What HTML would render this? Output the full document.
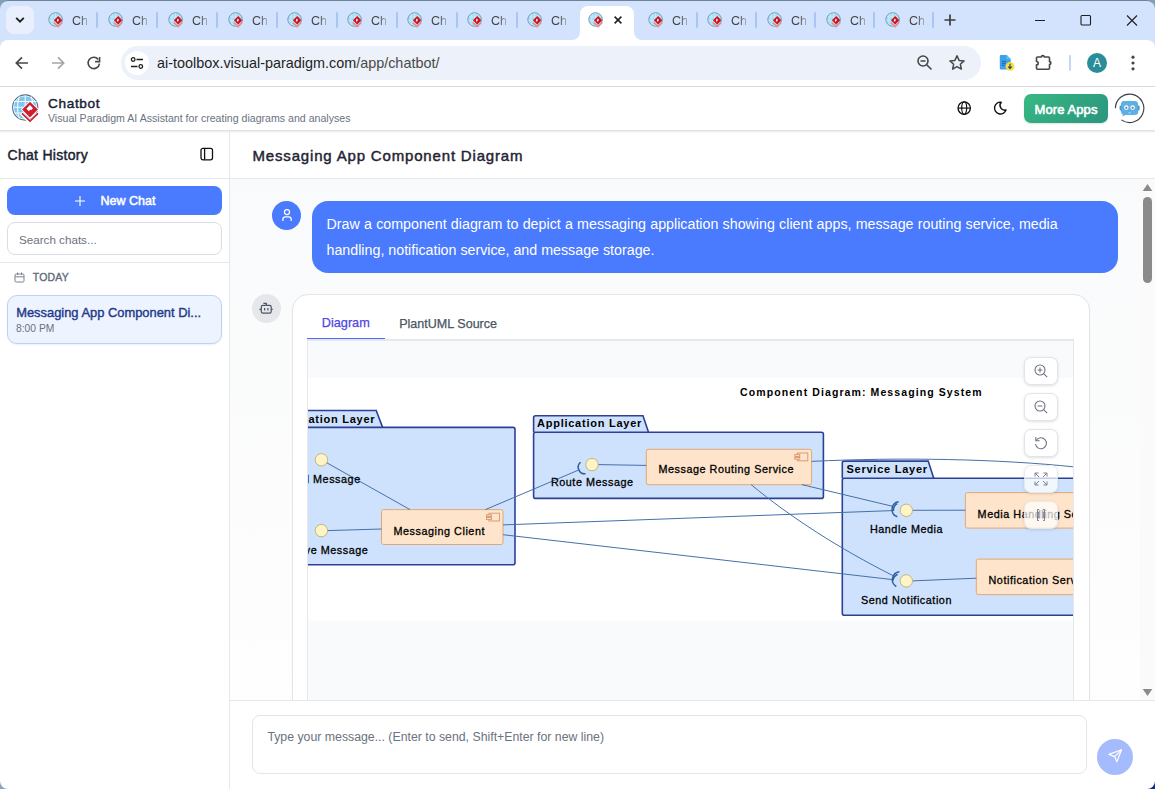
<!DOCTYPE html>
<html><head><meta charset="utf-8">
<style>
*{box-sizing:border-box;margin:0;padding:0}
html,body{width:1155px;height:789px;overflow:hidden;background:#fff;font-family:"Liberation Sans",sans-serif}
.a{position:absolute}
svg{display:block}
#desk{position:absolute;left:0;top:0;width:1155px;height:789px;background:#7f9fb8}
#frame{position:absolute;left:0;top:0;width:1155px;height:789px;background:#6f8493;border-radius:9px 9px 0 0}
#tabstrip{position:absolute;left:0;top:1px;width:1155px;height:50px;background:#d3e3fd;border-radius:8px 8px 0 0}
#ddbtn{position:absolute;left:6px;top:6px;width:28px;height:28px;background:#e9effc;border-radius:8px}
.fav{position:absolute;top:12px;width:16px;height:16px}
.tabtxt{position:absolute;top:12.2px;font-size:12.5px;color:#444;line-height:18px;width:15px;overflow:hidden;white-space:nowrap;-webkit-mask-image:linear-gradient(90deg,#000 50%,rgba(0,0,0,.35) 100%)}
.sep{position:absolute;top:12px;width:2px;height:16px;background:#a8c5f5;border-radius:1px}
#acttab{position:absolute;left:572px;top:6px;width:70px;height:34px}
#toolbar{position:absolute;left:0;top:40px;width:1155px;height:46px;background:#fff;border-radius:8px 8px 0 0}
#tbline{position:absolute;left:0;top:86px;width:1155px;height:1px;background:#d9dadd}
#omni{position:absolute;left:121px;top:46px;width:860px;height:34px;background:#edf1f9;border-radius:17px}
#tune{position:absolute;left:125px;top:51px;width:24px;height:24px;background:#fff;border-radius:12px}
#url{position:absolute;left:157px;top:54px;font-size:14.4px;line-height:18px;color:#1f1f1f;white-space:nowrap}
#url span{color:#4a4a4a}
#avatar{position:absolute;left:1087px;top:53px;width:20px;height:20px;border-radius:10px;background:#2a8d9a;color:#fff;font-size:12px;line-height:20px;text-align:center}
</style></head>
<body>
<svg width="0" height="0" style="position:absolute">
<defs>
<symbol id="vpfav" viewBox="0 0 16 16">
<circle cx="7.6" cy="7.5" r="6.8" fill="#a9def7" stroke="#7a9db0" stroke-width="1"/>
<path d="M2.5 5h10M1.5 8.5h12M7.6 1v13M4.8 1.8c-1.6 3.2-1.6 8.2 0 11.4" stroke="#cdeefc" stroke-width=".7" fill="none"/>
<path d="M5.9 10.6l4.3 4.2 4.1-4.2" stroke="#ec8a90" stroke-width="1.5" fill="none"/>
<path d="M10.2 4.1l4.1 4.2-4.1 4.2-4.3-4.2z" fill="#d0111f"/>
<path d="M9.7 6.6l1.4 1.3-.9.9-.1 1.2-1.3-1.3z" fill="#fff"/>
</symbol>
</defs>
</svg>
<div id="desk"></div>
<div id="frame"></div>
<div id="tabstrip"></div>
<div id="ddbtn"></div>
<svg class="a" style="left:15px;top:16px" width="10" height="8" viewBox="0 0 10 8"><path d="M1.2 1.8L5 5.6 8.8 1.8" stroke="#1f1f1f" stroke-width="1.9" fill="none"/></svg>
<svg id="acttab" viewBox="0 0 70 34"><path d="M0 34 A8 8 0 0 0 8 26 V8 A8 8 0 0 1 16 0 H54 A8 8 0 0 1 62 8 V26 A8 8 0 0 0 70 34 Z" fill="#fff"/></svg>
<svg class="fav" style="left:48px" viewBox="0 0 16 16"><use href="#vpfav"/></svg>
<div class="tabtxt" style="left:72px">Ch</div>
<svg class="fav" style="left:108px" viewBox="0 0 16 16"><use href="#vpfav"/></svg>
<div class="tabtxt" style="left:132px">Ch</div>
<svg class="fav" style="left:168px" viewBox="0 0 16 16"><use href="#vpfav"/></svg>
<div class="tabtxt" style="left:192px">Ch</div>
<svg class="fav" style="left:228px" viewBox="0 0 16 16"><use href="#vpfav"/></svg>
<div class="tabtxt" style="left:252px">Ch</div>
<svg class="fav" style="left:287px" viewBox="0 0 16 16"><use href="#vpfav"/></svg>
<div class="tabtxt" style="left:311px">Ch</div>
<svg class="fav" style="left:347px" viewBox="0 0 16 16"><use href="#vpfav"/></svg>
<div class="tabtxt" style="left:371px">Ch</div>
<svg class="fav" style="left:407px" viewBox="0 0 16 16"><use href="#vpfav"/></svg>
<div class="tabtxt" style="left:431px">Ch</div>
<svg class="fav" style="left:467px" viewBox="0 0 16 16"><use href="#vpfav"/></svg>
<div class="tabtxt" style="left:491px">Ch</div>
<svg class="fav" style="left:527px" viewBox="0 0 16 16"><use href="#vpfav"/></svg>
<div class="tabtxt" style="left:551px">Ch</div>
<svg class="fav" style="left:588px" viewBox="0 0 16 16"><use href="#vpfav"/></svg>
<svg class="fav" style="left:648px" viewBox="0 0 16 16"><use href="#vpfav"/></svg>
<div class="tabtxt" style="left:672px">Ch</div>
<svg class="fav" style="left:707px" viewBox="0 0 16 16"><use href="#vpfav"/></svg>
<div class="tabtxt" style="left:731px">Ch</div>
<svg class="fav" style="left:767px" viewBox="0 0 16 16"><use href="#vpfav"/></svg>
<div class="tabtxt" style="left:791px">Ch</div>
<svg class="fav" style="left:826px" viewBox="0 0 16 16"><use href="#vpfav"/></svg>
<div class="tabtxt" style="left:850px">Ch</div>
<svg class="fav" style="left:885px" viewBox="0 0 16 16"><use href="#vpfav"/></svg>
<div class="tabtxt" style="left:909px">Ch</div>
<div class="sep" style="left:96px"></div>
<div class="sep" style="left:156px"></div>
<div class="sep" style="left:216px"></div>
<div class="sep" style="left:276px"></div>
<div class="sep" style="left:335.5px"></div>
<div class="sep" style="left:395.8px"></div>
<div class="sep" style="left:455.8px"></div>
<div class="sep" style="left:516px"></div>
<div class="sep" style="left:695.8px"></div>
<div class="sep" style="left:754.8px"></div>
<div class="sep" style="left:814px"></div>
<div class="sep" style="left:873px"></div>
<div class="sep" style="left:932px"></div>
<svg class="a" style="left:614px;top:16px" width="8" height="8" viewBox="0 0 8 8"><path d="M.6 .6L7.4 7.4M7.4 .6L.6 7.4" stroke="#1f1f1f" stroke-width="1.5"/></svg>
<svg class="a" style="left:944px;top:14px" width="12" height="12" viewBox="0 0 12 12"><path d="M6 .5v11M.5 6h11" stroke="#3c3c3c" stroke-width="1.7"/></svg>
<div class="a" style="left:1035px;top:20px;width:10px;height:1px;background:#1f1f1f"></div>
<svg class="a" style="left:1080px;top:14px" width="12" height="12" viewBox="0 0 12 12"><rect x="1" y="1.5" width="9.5" height="9.5" rx="1" stroke="#1f1f1f" stroke-width="1.1" fill="none"/></svg>
<svg class="a" style="left:1126px;top:14px" width="12" height="12" viewBox="0 0 12 12"><path d="M1 1.5l10 10M11 1.5l-10 10" stroke="#1f1f1f" stroke-width="1.1"/></svg>

<div id="toolbar"></div>
<div id="tbline"></div>
<svg class="a" style="left:14px;top:55px" width="16" height="16" viewBox="0 0 16 16"><path d="M14 8H2.5M8 2.3L2.3 8 8 13.7" stroke="#474747" stroke-width="1.7" fill="none"/></svg>
<svg class="a" style="left:50px;top:55px" width="16" height="16" viewBox="0 0 16 16"><path d="M2 8h11.5M8 2.3L13.7 8 8 13.7" stroke="#a5a5a5" stroke-width="1.7" fill="none"/></svg>
<svg class="a" style="left:80px;top:50px" width="30" height="26" viewBox="80 50 30 26"><path d="M99.4 63.6A5.65 5.65 0 1 1 98.2 59.4" stroke="#474747" stroke-width="1.6" fill="none"/><path d="M99.6 57v4.6H95.1" stroke="#474747" stroke-width="1.6" fill="none"/></svg>
<div id="omni"></div>
<div id="tune"></div>
<svg class="a" style="left:129px;top:55px" width="16" height="16" viewBox="0 0 16 16"><circle cx="4.2" cy="4.5" r="1.8" stroke="#1f1f1f" stroke-width="1.3" fill="none"/><path d="M7.5 4.5h6.5M2 11.5h6.5" stroke="#1f1f1f" stroke-width="1.5"/><circle cx="11.8" cy="11.5" r="1.8" stroke="#1f1f1f" stroke-width="1.3" fill="none"/></svg>
<div id="url">ai-toolbox.visual-paradigm.com<span>/app/chatbot/</span></div>
<svg class="a" style="left:916px;top:54px" width="18" height="18" viewBox="0 0 18 18"><circle cx="7" cy="7" r="5" stroke="#474747" stroke-width="1.6" fill="none"/><path d="M4.5 7h5M10.7 10.7l4.8 4.8" stroke="#474747" stroke-width="1.6"/></svg>
<svg class="a" style="left:948px;top:54px" width="18" height="18" viewBox="0 0 18 18"><path d="M9 1.8l2.1 4.6 5 .5-3.8 3.3 1.1 4.9L9 12.6l-4.4 2.5 1.1-4.9L1.9 6.9l5-.5z" stroke="#474747" stroke-width="1.5" fill="none" stroke-linejoin="round"/></svg>
<svg class="a" style="left:996px;top:52px" width="20" height="20" viewBox="996 52 20 20"><path d="M1000.7 55h6l4 4v9.6a.9.9 0 0 1-.9.9h-9.1a.9.9 0 0 1-.9-.9v-12.7a.9.9 0 0 1 .9-.9z" fill="#3e9ff0"/><path d="M1006.5 55l4.2 4.2h-4.2z" fill="#3fd9c4"/><path d="M1001.8 61.4h4.2M1001.8 63.3h4.2M1001.8 65.2h3" stroke="#1d5fa8" stroke-width=".9"/><circle cx="1010" cy="66.4" r="4.4" fill="#f6dc3c"/><path d="M1010 63.8v4.6M1008.2 66.7l1.8 1.8 1.8-1.8" stroke="#233a6b" stroke-width="1.1" fill="none"/></svg>
<svg class="a" style="left:1032px;top:52px" width="22" height="22" viewBox="1032 52 22 22"><path d="M1037.5 57h3.9a1.4 1.4 0 0 1 2.8 0h4.3a1 1 0 0 1 1 1v3.6a1.4 1.4 0 0 1 0 2.8v3.9a1 1 0 0 1-1 1h-11a1 1 0 0 1-1-1v-3.4a1.7 1.7 0 0 0 0-3.4v-3.5a1 1 0 0 1 1-1z" stroke="#474747" stroke-width="1.6" fill="none" stroke-linejoin="round"/></svg>
<div class="a" style="left:1069px;top:55px;width:2px;height:16px;background:#c8d6f0;border-radius:1px"></div>
<div id="avatar">A</div>
<svg class="a" style="left:1130px;top:55px" width="6" height="16" viewBox="0 0 6 16"><circle cx="3" cy="2.2" r="1.6" fill="#474747"/><circle cx="3" cy="8" r="1.6" fill="#474747"/><circle cx="3" cy="13.8" r="1.6" fill="#474747"/></svg>

<!-- APP -->
<div class="a" style="left:0;top:87px;width:1155px;height:702px;background:#fff"></div>
<div class="a" style="left:0;top:130px;width:1155px;height:1px;background:#e1e3e7"></div>
<div class="a" style="left:0;top:131px;width:1155px;height:1px;background:#eceef1"></div>
<div class="a" style="left:0;top:132px;width:1155px;height:1px;background:#f7f8f9"></div>
<svg class="a" style="left:8px;top:90px" width="34" height="35" viewBox="8 90 34 35">
<circle cx="25.2" cy="107.5" r="12.6" fill="#fff" stroke="#4f7386" stroke-width="1.1"/>
<circle cx="25.2" cy="107.5" r="11.2" fill="#7fc6f0"/>
<path d="M14 101.5h22.4M13.8 107.3h22.8M14.5 113h21.4M25.2 95.5v24M19.5 96.5c-2.5 5-2.5 17 0 22M31 96.5c2.5 5 2.5 17 0 22" stroke="#f4fbff" stroke-width="1.1" fill="none"/>
<path d="M21.2 113.2L30 122l8.8-8.8" stroke="#fff" stroke-width="3.6" fill="none"/>
<path d="M22 113.3l8 7.8 8-7.8" stroke="#cc1f2d" stroke-width="1.7" fill="none"/>
<path d="M30 100.4l9.2 9.2-9.2 9.2-9.2-9.2z" fill="#fff"/>
<path d="M30 101.7l7.9 7.9-7.9 7.9-7.9-7.9z" fill="#cc1f2d"/>
<path d="M29.9 105.1l3.1 3.1-2 2-0.6-.6-1.6 1.6-2.4-2.4z" fill="#fff"/>
</svg>
<div class="a" style="left:48px;top:96.5px;font-size:13.6px;line-height:14px;letter-spacing:.65px;-webkit-text-stroke:.45px #1b2233;color:#1b2233;white-space:nowrap">Chatbot</div>
<div class="a" style="left:48px;top:112.5px;font-size:10.6px;line-height:11px;color:#6b7280;white-space:nowrap">Visual Paradigm AI Assistant for creating diagrams and analyses</div>
<svg class="a" style="left:956px;top:100px" width="16" height="16" viewBox="0 0 16 16"><circle cx="8.2" cy="8.1" r="6.2" stroke="#111" stroke-width="1.3" fill="none"/><path d="M2 8.1h12.4" stroke="#111" stroke-width="1.2"/><ellipse cx="8.2" cy="8.1" rx="2.5" ry="6.2" stroke="#111" stroke-width="1.2" fill="none"/></svg>
<svg class="a" style="left:992px;top:100px" width="16" height="16" viewBox="0 0 16 16"><path d="M9.2 2.2A5.9 5.9 0 1 0 14 10 4.8 4.8 0 0 1 9.2 2.2z" stroke="#111" stroke-width="1.4" fill="none" stroke-linejoin="round"/></svg>
<div class="a" style="left:1024px;top:94px;width:84px;height:29px;border-radius:7px;background:linear-gradient(135deg,#38b882,#2a9580);box-shadow:0 1px 2px rgba(0,0,0,.12)"></div>
<div class="a" style="left:1024px;top:103px;width:84px;text-align:center;font-size:13px;line-height:14px;letter-spacing:.1px;-webkit-text-stroke:.6px #fff;color:#fff;white-space:nowrap">More Apps</div>
<svg class="a" style="left:1110px;top:90px" width="40" height="36" viewBox="1110 90 40 36">
<path d="M1115.4 108.3A14.2 14.2 0 1 1 1121.4 119.9" stroke="#3a4150" stroke-width="1.15" fill="none"/>
<path d="M1121 103.3a3 3 0 0 1 2.8-2.2h11.4a3 3 0 0 1 2.8 2.2l.2 8.2a3.5 3.5 0 0 1-3.5 3.6h-9.6l-2.6 1.6.3-2.2a3.5 3.5 0 0 1-1.9-3z" fill="#5db0e6"/>
<rect x="1119.6" y="105.5" width="2" height="5" rx="1" fill="#4a9ad4"/><rect x="1137.6" y="105.5" width="2" height="5" rx="1" fill="#4a9ad4"/>
<circle cx="1126.3" cy="107.6" r="2.3" fill="#f4fbff"/><circle cx="1132.6" cy="107.6" r="2.3" fill="#f4fbff"/>
<circle cx="1126.3" cy="107.8" r="1.1" fill="#6f7f8c"/><circle cx="1132.6" cy="107.8" r="1.1" fill="#6f7f8c"/>
<path d="M1128.3 112.4h2.6a1.3 1 0 0 1-2.6 0z" fill="#bfe3f8"/>
</svg>

<!-- SIDEBAR -->
<div class="a" style="left:229px;top:131px;width:1px;height:658px;background:#e5e7eb"></div>
<div class="a" style="left:7.5px;top:147.6px;font-size:14px;line-height:14px;letter-spacing:.3px;-webkit-text-stroke:.45px #1b2233;color:#1b2233;white-space:nowrap">Chat History</div>
<svg class="a" style="left:199px;top:146px" width="16" height="16" viewBox="0 0 16 16"><rect x="2" y="2.3" width="11.5" height="11.5" rx="2" stroke="#111" stroke-width="1.3" fill="none"/><path d="M5.6 2.3v11.5" stroke="#111" stroke-width="1.3"/></svg>
<div class="a" style="left:0;top:178px;width:229px;height:1px;background:#e5e7eb"></div>
<div class="a" style="left:7px;top:186px;width:215px;height:29px;border-radius:8px;background:#4a7afd"></div>
<svg class="a" style="left:74px;top:195px" width="12" height="12" viewBox="0 0 12 12"><path d="M6 1v10M1 6h10" stroke="#fff" stroke-width="1.1"/></svg>
<div class="a" style="left:100.5px;top:195.2px;font-size:12.5px;line-height:13px;-webkit-text-stroke:.5px #fff;color:#fff;white-space:nowrap">New Chat</div>
<div class="a" style="left:7px;top:222px;width:215px;height:33px;border-radius:8px;border:1px solid #dadde2;background:#fff"></div>
<div class="a" style="left:19px;top:234px;font-size:11.65px;line-height:12px;color:#6b7280;white-space:nowrap">Search chats...</div>
<div class="a" style="left:0;top:262px;width:229px;height:1px;background:#e5e7eb"></div>
<svg class="a" style="left:14px;top:272px" width="11" height="11" viewBox="0 0 11 11"><rect x="1" y="2" width="9" height="8" rx="1.2" stroke="#7b8190" stroke-width="1" fill="none"/><path d="M1 4.8h9M3.5 .5v2.5M7.5 .5v2.5" stroke="#7b8190" stroke-width="1"/></svg>
<div class="a" style="left:32.8px;top:272px;font-size:10.5px;line-height:11px;letter-spacing:.2px;-webkit-text-stroke:.35px #636a78;color:#636a78;white-space:nowrap">TODAY</div>
<div class="a" style="left:7px;top:295px;width:215px;height:49px;border-radius:10px;border:1px solid #bcd2fb;background:#eef4ff;box-shadow:0 1px 2px rgba(0,0,0,.07)"></div>
<div class="a" style="left:16.2px;top:305.5px;font-size:12.9px;line-height:13px;-webkit-text-stroke:.4px #1e3a8a;color:#1e3a8a;white-space:nowrap">Messaging App Component Di...</div>
<div class="a" style="left:16px;top:323px;font-size:10.3px;line-height:11px;color:#6b7280;white-space:nowrap">8:00 PM</div>

<!-- MAIN -->
<div class="a" style="left:230px;top:179px;width:925px;height:521px;background:linear-gradient(#f9fafb,#fefefe)"></div>
<div class="a" style="left:1140px;top:179px;width:15px;height:521px;background:#fafafa"></div>
<div class="a" style="left:230px;top:178px;width:925px;height:1px;background:#e5e7eb"></div>
<div class="a" style="left:252.5px;top:148.2px;font-size:15px;line-height:16px;font-weight:400;letter-spacing:.83px;-webkit-text-stroke:.45px #1f2433;color:#1f2433;white-space:nowrap">Messaging App Component Diagram</div>

<div class="a" style="left:272px;top:201px;width:29px;height:29px;border-radius:50%;background:#4a7afd"></div>
<svg class="a" style="left:276px;top:205px" width="20" height="20" viewBox="276 205 20 20"><circle cx="287" cy="212.1" r="2.55" stroke="#fff" stroke-width="1.2" fill="none"/><path d="M282.9 221v-1.6a2.5 2.5 0 0 1 2.5-2.5h3.3a2.5 2.5 0 0 1 2.5 2.5V221" stroke="#fff" stroke-width="1.2" fill="none"/></svg>
<div class="a" style="left:312px;top:201px;width:806px;height:72px;border-radius:16px;background:#4a7afd"></div>
<div class="a" style="left:326.5px;top:212.3px;font-size:14.25px;line-height:25.7px;color:#fff;white-space:nowrap;word-spacing:.27px">Draw a component diagram to depict a messaging application showing client apps, message routing service, media</div>
<div class="a" style="left:326.5px;top:238px;font-size:14.25px;line-height:25.7px;color:#fff;white-space:nowrap">handling, notification service, and message storage.</div>

<div class="a" style="left:252px;top:294px;width:29px;height:29px;border-radius:50%;background:#e5e7eb"></div>
<svg class="a" style="left:256px;top:298px" width="20" height="20" viewBox="256 298 20 20"><rect x="261.3" y="305.4" width="9.9" height="7.8" rx="1.6" stroke="#4b5563" stroke-width="1.2" fill="none"/><path d="M266.3 305.4v-2h-2.9M259.4 309.4h1.9M271.2 309.4h1.5M264.6 308v2.4M267.9 308v2.4" stroke="#4b5563" stroke-width="1.2" fill="none"/></svg>

<div class="a" style="left:292px;top:294px;width:798px;height:520px;border-radius:16px;border:1px solid #e3e5e9;background:#fff;box-shadow:0 1px 2px rgba(0,0,0,.04)"></div>
<div class="a" style="left:321.8px;top:317px;font-size:12.7px;line-height:13px;color:#4f46e5;white-space:nowrap;-webkit-text-stroke:.25px #4f46e5">Diagram</div>
<div class="a" style="left:399.2px;top:317.5px;font-size:12.55px;line-height:13px;color:#4b5563;white-space:nowrap;-webkit-text-stroke:.25px #4b5563">PlantUML Source</div>
<div class="a" style="left:307px;top:339px;width:767px;height:400px;border:1px solid #e5e7eb;background:#f9fafb"></div>
<div class="a" style="left:307px;top:339px;width:767px;height:2px;background:#e5e7eb"></div>
<div class="a" style="left:307px;top:337.7px;width:78px;height:1.5px;background:#4f6ef7"></div>

<div class="a" style="left:308px;top:340px;width:765px;height:360px;overflow:hidden">
<svg class="a" style="left:0;top:0" width="765" height="360" viewBox="308 340 765 360">
<rect x="308" y="378" width="765" height="242.5" fill="#fff"/>
<g stroke="#2c4196" stroke-width="1.6" fill="#cee2fd">
<path d="M255 427.4V412.5a2 2 0 0 1 2-2H376.2L382.6 427.4"/>
<rect x="255" y="427.4" width="260" height="137.4" rx="2"/>
<path d="M533.6 432.3V417.7a2 2 0 0 1 2-2H643L648.5 432.3"/>
<rect x="533.6" y="432.3" width="289.8" height="66.1" rx="2"/>
<path d="M842.3 478.2V463.1a2 2 0 0 1 2-2H928.2L933.7 478.2"/>
<rect x="842.3" y="478.2" width="300" height="137.1" rx="2"/>
</g>
<g stroke="#e0a878" stroke-width="1" fill="#fde4cb">
<rect x="381.5" y="509.6" width="121.5" height="34.9" rx="2"/>
<rect x="646.3" y="449.3" width="165.3" height="35.4" rx="2"/>
<rect x="965.4" y="492.6" width="200" height="35.5" rx="2"/>
<rect x="976.3" y="559.1" width="200" height="35.5" rx="2"/>
</g>
<g stroke="#d8966a" stroke-width=".9" fill="#fde4cb">
<rect x="489" y="513.2" width="10.5" height="7.8"/>
<rect x="486.5" y="514.8" width="5" height="1.8"/>
<rect x="486.5" y="517.6" width="5" height="1.8"/>
<rect x="797.3" y="453" width="10.5" height="7.8"/>
<rect x="794.8" y="454.6" width="5" height="1.8"/>
<rect x="794.8" y="457.4" width="5" height="1.8"/>
</g>
<g stroke="#4670a8" stroke-width="1" fill="none">
<path d="M326.8 462.8L410 509.6"/>
<path d="M327.4 530.6L381.5 529"/>
<path d="M485.4 509.6L578 470.3"/>
<path d="M598 464.6L646.3 465.4"/>
<path d="M503 524.9L892.3 510.6"/>
<path d="M503 534.7L892.5 579.6"/>
<path d="M811.6 461.4C900 457 1000 459 1075 467"/>
<path d="M751.1 484.6C790 517 840 549 892.8 575.5"/>
<path d="M801.8 484.6L892.6 506.3"/>
<path d="M912.6 510.3L965.4 510.2"/>
<path d="M912.6 580.9L976.3 578.2"/>
</g>
<g stroke="#2f5f9e" stroke-width="1.5" fill="none">
<path d="M580.6 462.2A6.6 6.6 0 0 0 585.6 473.8"/>
<path d="M898.6 501.8A7.7 7.7 0 0 0 897.3 516.7"/>
<path d="M897.2 503.6A7.7 7.7 0 0 0 893.5 511"/>
<path d="M899.4 571.7A8 8 0 0 0 896.3 586.5"/>
<path d="M897.6 574.2A8 8 0 0 0 893 580.5"/>
</g>
<g stroke="#c4ad6c" stroke-width=".9" fill="#fef5c6">
<circle cx="321.4" cy="459.8" r="6.2"/>
<circle cx="321.4" cy="530.6" r="6.2"/>
<circle cx="592" cy="464.6" r="6.2"/>
<circle cx="906.3" cy="510.3" r="6.2"/>
<circle cx="906.3" cy="580.9" r="6.2"/>
</g>
<g font-family="Liberation Sans" fill="#000">
<text x="740" y="395.6" font-size="10.5" font-weight="700" letter-spacing="1.1">Component Diagram: Messaging System</text>
<text x="375.4" y="423.3" font-size="11" font-weight="700" text-anchor="end" letter-spacing=".75">Presentation Layer</text>
<text x="537" y="426.9" font-size="11" font-weight="700" letter-spacing=".75">Application Layer</text>
<text x="846.5" y="473" font-size="11" font-weight="700" letter-spacing=".75">Service Layer</text>
<g font-size="10.8" stroke="#000" stroke-width=".3" letter-spacing=".55">
<text x="321.4" y="483.3" text-anchor="middle">Send Message</text>
<text x="321.4" y="554" text-anchor="middle">Receive Message</text>
<text x="393.4" y="535.2">Messaging Client</text>
<text x="592.3" y="486.3" text-anchor="middle">Route Message</text>
<text x="658.4" y="473.4">Message Routing Service</text>
<text x="906.5" y="532.7" text-anchor="middle">Handle Media</text>
<text x="906.5" y="603.7" text-anchor="middle">Send Notification</text>
<text x="977.6" y="517.7">Media Handling Service</text>
<text x="988.5" y="583.8">Notification Service</text>
</g>
</g>
</svg>
</div>

<!-- zoom buttons -->
<div class="a" style="left:1024px;top:356.5px;width:34px;height:28px;border-radius:7px;background:rgba(255,255,255,1);box-shadow:0 1px 3px rgba(0,0,0,.13);border:1px solid rgba(225,228,233,1)"></div>
<svg class="a" style="left:1033px;top:362.5px" width="16" height="16" viewBox="0 0 16 16"><circle cx="7" cy="7" r="5" stroke="#6b7280" stroke-width="1.05" fill="none"/><path d="M4.6 7h4.8M7 4.6v4.8M10.6 10.6l3.6 3.6" stroke="#6b7280" stroke-width="1.05"/></svg>
<div class="a" style="left:1024px;top:392.5px;width:34px;height:28px;border-radius:7px;background:rgba(255,255,255,1);box-shadow:0 1px 3px rgba(0,0,0,.13);border:1px solid rgba(225,228,233,1)"></div>
<svg class="a" style="left:1033px;top:398.5px" width="16" height="16" viewBox="0 0 16 16"><circle cx="7" cy="7" r="5" stroke="#6b7280" stroke-width="1.05" fill="none"/><path d="M4.6 7h4.8M10.6 10.6l3.6 3.6" stroke="#6b7280" stroke-width="1.05"/></svg>
<div class="a" style="left:1024px;top:428.7px;width:34px;height:28px;border-radius:7px;background:rgba(255,255,255,1);box-shadow:0 1px 3px rgba(0,0,0,.13);border:1px solid rgba(225,228,233,1)"></div>
<svg class="a" style="left:1033px;top:434.7px" width="16" height="16" viewBox="0 0 16 16"><path d="M3.2 5.5A5.5 5.5 0 1 1 2.5 9" stroke="#6b7280" stroke-width="1.05" fill="none"/><path d="M2.8 2v3.8h3.8" stroke="#6b7280" stroke-width="1.05" fill="none"/></svg>
<div class="a" style="left:1024px;top:464.7px;width:34px;height:28px;border-radius:7px;background:rgba(255,255,255,0.72);box-shadow:0 1px 3px rgba(0,0,0,.13);border:1px solid rgba(225,228,233,0.72)"></div>
<svg class="a" style="left:1033px;top:470.7px" width="16" height="16" viewBox="0 0 16 16"><path d="M2 2l4 4M2 2v3.5M2 2h3.5M14 2l-4 4M14 2v3.5M14 2h-3.5M2 14l4-4M2 14v-3.5M2 14h3.5M14 14l-4-4M14 14v-3.5M14 14h-3.5" stroke="#7b818c" stroke-width="1" fill="none"/></svg>
<div class="a" style="left:1024px;top:501px;width:34px;height:28px;border-radius:7px;background:rgba(255,255,255,0.72);box-shadow:0 1px 3px rgba(0,0,0,.13);border:1px solid rgba(225,228,233,0.72)"></div>
<svg class="a" style="left:1033px;top:507px" width="16" height="16" viewBox="0 0 16 16"><path d="M6 2.5H4.5v11H6M10 2.5h1.5v11H10M6.5 5h-.8v6h.8M9.5 5h.8v6h-.8" stroke="#7b818c" stroke-width="1" fill="none"/></svg>


<!-- scrollbar -->
<svg class="a" style="left:1142px;top:183px" width="11" height="9" viewBox="0 0 11 9"><path d="M5.5 1L10.3 8H.7z" fill="#8a8a8a"/></svg>
<div class="a" style="left:1143px;top:197px;width:9px;height:86px;border-radius:4.5px;background:#8a8a8a"></div>
<svg class="a" style="left:1142px;top:688px" width="11" height="9" viewBox="0 0 11 9"><path d="M5.5 8L10.3 1H.7z" fill="#8a8a8a"/></svg>

<!-- INPUT -->
<div class="a" style="left:230px;top:700px;width:925px;height:89px;background:#fff;border-top:1px solid #e5e7eb"></div>
<div class="a" style="left:252px;top:715px;width:835px;height:59px;border-radius:8px;border:1px solid #e3e5e9;background:#fff"></div>
<div class="a" style="left:267.4px;top:730.8px;font-size:12.3px;line-height:12px;color:#6b7280;white-space:nowrap">Type your message... (Enter to send, Shift+Enter for new line)</div>
<div class="a" style="left:1097px;top:739px;width:36px;height:36px;border-radius:50%;background:#a4bcfd"></div>
<svg class="a" style="left:1100px;top:742px" width="30" height="30" viewBox="1100 742 30 30"><path d="M1121.5 749.8L1108.9 754.4 1114.6 756.6 1116.9 761.8z" stroke="#fff" stroke-width="1.15" fill="none" stroke-linejoin="round"/><path d="M1114.6 756.6L1121.5 749.8" stroke="#fff" stroke-width="1.15"/></svg>
<svg class="a" style="left:0;top:781px" width="8" height="8" viewBox="0 0 8 8"><path d="M0 0A8 8 0 0 0 8 8H0z" fill="#8ea3b8"/></svg>
<svg class="a" style="left:1147px;top:781px" width="8" height="8" viewBox="0 0 8 8"><path d="M8 0A8 8 0 0 1 0 8H8z" fill="#0b2f8c"/></svg>
</body></html>
